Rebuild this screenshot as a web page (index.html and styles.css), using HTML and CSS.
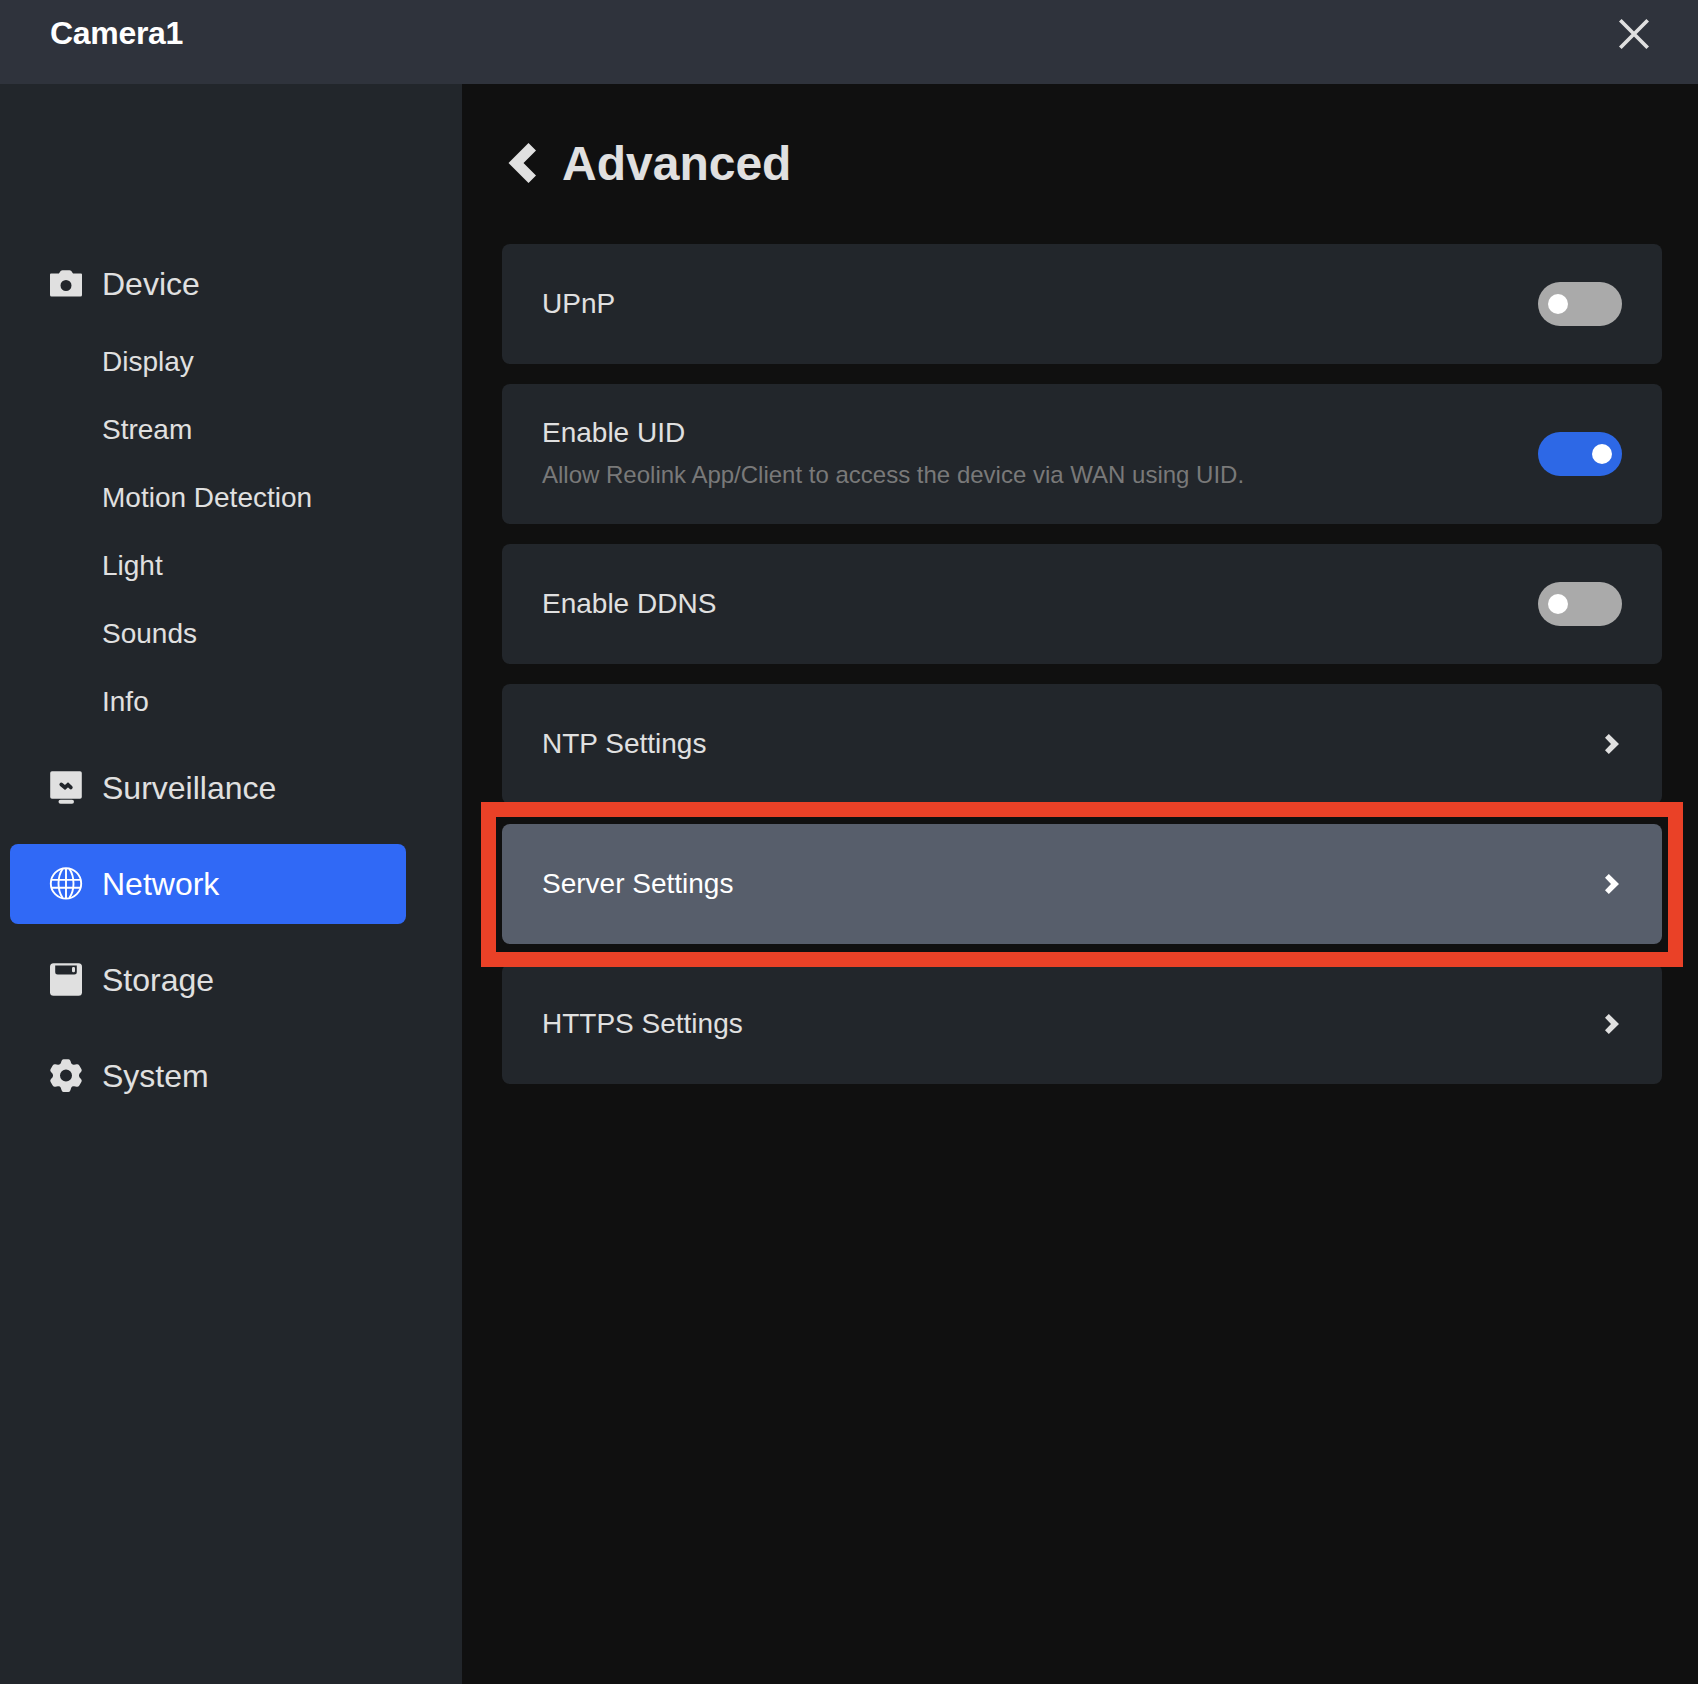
FILE: index.html
```html
<!DOCTYPE html>
<html lang="en">
<head>
<meta charset="utf-8">
<title>Camera1</title>
<link rel="stylesheet" href="styles.css">
</head>
<body>
<header class="titlebar">
  <span class="titlebar-name">Camera1</span>
  <svg class="close" viewBox="0 0 30 30"><path d="M1.300 1.300l27.400 27.400M28.700 1.300l-27.400 27.400" fill="none" stroke="currentColor" stroke-width="3.700"/></svg>
</header>
<div class="layout">
  <nav class="sidebar">
    <div class="nav-item">
      <svg class="nav-icon" viewBox="0 0 32 32"><path fill="currentColor" fill-rule="evenodd" d="M1 6.500H8.500C9.700 6.500 10 3.200 12.500 3.200H19.500C22 3.200 22.300 6.500 23.500 6.500H31Q32 6.500 32 7.500V28Q32 29.500 30.500 29.500H1.500Q0 29.500 0 28V7.500Q0 6.500 1 6.500ZM16 13a5.500 5.500 0 1 0 0 11a5.500 5.500 0 1 0 0-11Z"/></svg>
      <span>Device</span>
    </div>
    <ul class="subnav">
      <li>Display</li>
      <li>Stream</li>
      <li>Motion Detection</li>
      <li>Light</li>
      <li>Sounds</li>
      <li>Info</li>
    </ul>
    <div class="nav-item">
      <svg class="nav-icon" viewBox="0 0 32 32"><rect x="0.200" y="0.200" width="31.600" height="27.600" rx="1.800" fill="currentColor"/><rect x="8.500" y="28.700" width="15.500" height="4" rx="2" fill="currentColor"/><path d="M11.300 13.500l3.700 3 3-2.600 2.800 2.500" fill="none" stroke="#22262b" stroke-width="3.800" stroke-linecap="round"/></svg>
      <span>Surveillance</span>
    </div>
    <div class="nav-item active">
      <svg class="nav-icon" viewBox="0 0 32 32"><g fill="none" stroke="currentColor" stroke-width="1.900"><circle cx="16" cy="16.400" r="15.200"/><path d="M16 1.400V31.400M2 12.900H30M2 20.700H30M12.700 1.800Q8.500 7.900 8.500 16.400T12.700 31M19.300 1.800Q23.500 7.900 23.500 16.400T19.300 31"/></g></svg>
      <span>Network</span>
    </div>
    <div class="nav-item">
      <svg class="nav-icon" viewBox="0 0 32 32"><rect y="0.300" width="32" height="32.400" rx="3.500" fill="currentColor"/><path d="M5.200 2.400H26.800V8.900Q26.800 11.400 24.300 11.400H7.700Q5.200 11.400 5.200 8.900Z" fill="#22262b"/><rect x="22" y="4" width="3" height="5.300" rx="1.200" fill="currentColor"/></svg>
      <span>Storage</span>
    </div>
    <div class="nav-item">
      <svg class="nav-icon" viewBox="0 0 32 32"><path transform="translate(0 .5)" fill="currentColor" fill-rule="evenodd" d="M13.500-.300H18.500Q20 -.300 20.500 1.500L21.200 3.800Q22 5.400 24 5.200L26.700 4.700Q28.300 4.400 29.300 5.900L31.500 9.800Q32.200 11.200 31 12.500L29.400 14.300Q28.400 16 29.400 17.700L31 19.500Q32.200 20.800 31.500 22.200L29.300 26.100Q28.300 27.600 26.700 27.300L24 26.800Q22 26.600 21.200 28.200L20.500 30.500Q20 32.400 18.500 32.400H13.500Q12 32.400 11.500 30.500L10.800 28.200Q10 26.600 8 26.800L5.300 27.300Q3.700 27.600 2.700 26.100L.5 22.200Q-.2 20.800 1 19.500L2.600 17.700Q3.600 16 2.600 14.300L1 12.500Q-.2 11.200 .5 9.800L2.700 5.900Q3.700 4.400 5.300 4.700L8 5.200Q10 5.400 10.800 3.800L11.500 1.500Q12 -.300 13.500 -.300ZM16 10a6 6 0 1 0 0 12a6 6 0 1 0 0-12Z"/></svg>
      <span>System</span>
    </div>
  </nav>
  <main class="content">
    <h1 class="page-title">
      <svg class="back" viewBox="0 0 28 40"><path d="M20.500 0L28 7.500 15.500 20 28 32.500 20.500 40 .5 20Z" fill="currentColor"/></svg>
      <span>Advanced</span>
    </h1>
    <section class="cards">
      <div class="card"><span>UPnP</span><span class="toggle"></span></div>
      <div class="card tall">
        <div class="card-text"><span>Enable UID</span><span class="hint">Allow Reolink App/Client to access the device via WAN using UID.</span></div>
        <span class="toggle on"></span>
      </div>
      <div class="card"><span>Enable DDNS</span><span class="toggle"></span></div>
      <div class="card"><span>NTP Settings</span><svg class="chevron" viewBox="0 0 14 20"><path d="M3.800 0L0 3.800 6 10 0 16.200 3.800 20 14 10Z" fill="currentColor"/></svg></div>
      <div class="card selected"><span>Server Settings</span><svg class="chevron" viewBox="0 0 14 20"><path d="M3.800 0L0 3.800 6 10 0 16.200 3.800 20 14 10Z" fill="currentColor"/></svg><span class="highlight"></span></div>
      <div class="card"><span>HTTPS Settings</span><svg class="chevron" viewBox="0 0 14 20"><path d="M3.800 0L0 3.800 6 10 0 16.200 3.800 20 14 10Z" fill="currentColor"/></svg></div>
    </section>
  </main>
</div>
</body>
</html>
```
FILE: styles.css
```css
* { box-sizing: border-box; }

body {
  margin: 0;
  height: 1684px;
  display: flex;
  flex-direction: column;
  overflow: hidden;
  background: #101010;
  color: #e0e0e0;
  font-family: "Liberation Sans", Arial, sans-serif;
  font-size: 28px;
}

svg { display: block; flex: none; overflow: visible; }

.titlebar {
  height: 84px;
  flex: none;
  display: flex;
  justify-content: space-between;
  align-items: flex-start;
  padding: 15px 49px 0 50px;
  background: #2f333c;
}

.titlebar-name {
  color: #fff;
  font-size: 32px;
  line-height: 36px;
  font-weight: 700;
  letter-spacing: -0.3px;
}

.close { width: 30px; height: 30px; margin-top: 3.500px; }

.layout { flex: 1; display: flex; }

.sidebar {
  width: 462px;
  flex: none;
  padding: 160px 56px 0 10px;
  background: #22262b;
}

.nav-item {
  height: 80px;
  display: flex;
  align-items: center;
  gap: 20px;
  padding-left: 40px;
  border-radius: 8px;
  font-size: 32px;
}

.nav-item + .nav-item { margin-top: 16px; }

.nav-item.active { background: #3069f6; color: #fff; }

.nav-icon { width: 32px; height: 32px; margin-bottom: 2px; }

.subnav {
  list-style: none;
  margin: 0 0 16px;
  padding: 4px 0 0 92px;
  height: 408px;
}

.subnav li { height: 68px; line-height: 68px; }

.content { flex: 1; padding: 0 36px 0 40px; }

.page-title {
  height: 160px;
  margin: 0;
  display: flex;
  align-items: center;
  gap: 26px;
  padding: 0 0 2px 6px;
  font-size: 48px;
  font-weight: 700;
}

.back { width: 28px; height: 40px; }

.cards { display: flex; flex-direction: column; gap: 20px; }

.card {
  position: relative;
  height: 120px;
  display: flex;
  align-items: center;
  justify-content: space-between;
  padding: 0 40px;
  border-radius: 8px;
  background: #22262b;
}

.card.tall { height: 140px; }

.card.selected { background: #575e6b; color: #fff; z-index: 1; }

.card-text {
  display: flex;
  flex-direction: column;
  gap: 8px;
  padding-bottom: 2px;
  line-height: 36px;
}

.hint { color: #797979; font-size: 24px; line-height: 32px; }

.toggle {
  width: 84px;
  height: 44px;
  display: flex;
  align-items: center;
  padding: 0 10px;
  border-radius: 22px;
  background: #aaa;
}

.toggle::before {
  content: "";
  width: 20px;
  height: 20px;
  border-radius: 50%;
  background: #fff;
}

.toggle.on { justify-content: flex-end; background: #2d68e6; }

.chevron { width: 14px; height: 20px; margin-right: 3px; }

.highlight {
  position: absolute;
  inset: -22px -21px -23px -21px;
  border: 15px solid #ea4127;
}
```
